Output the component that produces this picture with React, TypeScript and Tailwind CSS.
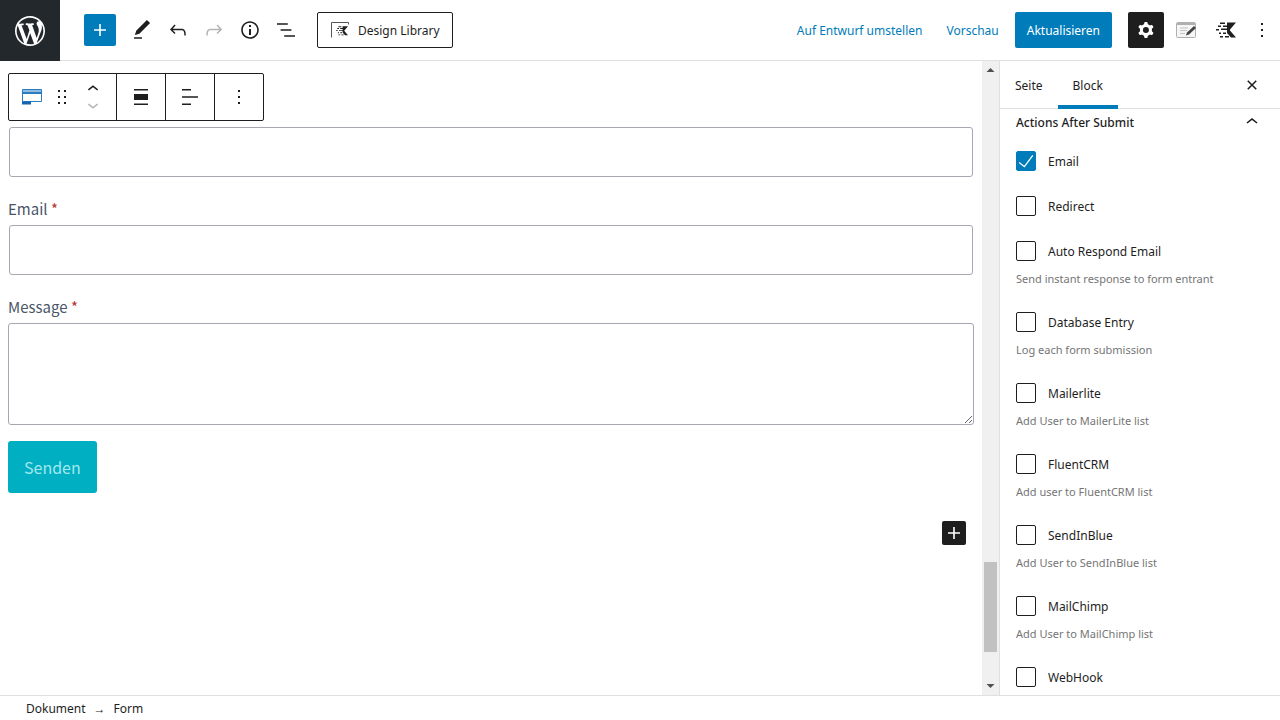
import { useState } from 'react';
import type { ReactNode } from 'react';

type Action = { id: string; label: string; help?: string };

const actions: Action[] = [
  { id: 'email', label: 'Email' },
  { id: 'redirect', label: 'Redirect' },
  { id: 'autoEmail', label: 'Auto Respond Email', help: 'Send instant response to form entrant' },
  { id: 'entry', label: 'Database Entry', help: 'Log each form submission' },
  { id: 'mailerlite', label: 'Mailerlite', help: 'Add User to MailerLite list' },
  { id: 'fluentCRM', label: 'FluentCRM', help: 'Add user to FluentCRM list' },
  { id: 'sendinblue', label: 'SendInBlue', help: 'Add User to SendInBlue list' },
  { id: 'mailchimp', label: 'MailChimp', help: 'Add User to MailChimp list' },
  { id: 'webhook', label: 'WebHook' },
];

const paths = {
  plus: 'M18 11.2h-5.2V6h-1.6v5.2H6v1.6h5.2V18h1.6v-5.2H18z',
  edit: 'M20.1 5.1L16.9 2 6.2 12.7l-1.3 4.4 4.5-1.3L20.1 5.1zM4 20.8h8v-1.5H4v1.5z',
  undo: 'M18.3 11.7c-.6-.6-1.4-.9-2.3-.9H6.7l2.9-3.3-1.1-1-4.5 5L8.5 16l1-1-2.7-2.7H16c.5 0 .9.2 1.3.5 1 1 1 3.4 1 4.5v.3h1.5v-.2c0-1.5 0-4.3-1.5-5.7z',
  redo: 'M15.6 6.5l-1.1 1 2.9 3.3H8c-.9 0-1.7.3-2.3.9-1.4 1.5-1.4 4.2-1.4 5.6v.2h1.5v-.3c0-1.1 0-3.5 1-4.5.3-.3.7-.5 1.3-.5h9.2L14.5 15l1.1 1.1 4.6-4.6-4.6-5z',
  info: 'M12 3.2c-4.8 0-8.8 3.9-8.8 8.8 0 4.8 3.9 8.8 8.8 8.8 4.8 0 8.8-3.9 8.8-8.8 0-4.8-4-8.8-8.8-8.8zm0 16c-4 0-7.2-3.3-7.2-7.2C4.8 8 8 4.8 12 4.8s7.2 3.3 7.2 7.2c0 4-3.2 7.2-7.2 7.2zM11 17h2v-6h-2v6zm0-8h2V7h-2v2z',
  listView: 'M13.8 5.2H3v1.5h10.8V5.2zm-3.6 12v1.5H21v-1.5H10.2zm7.2-6H6.6v1.5h10.8v-1.5z',
  cog: 'M10.289 4.836A1 1 0 0111.275 4h1.306a1 1 0 01.987.836l.244 1.466c.787.26 1.503.679 2.108 1.218l1.393-.522a1 1 0 011.216.437l.653 1.13a1 1 0 01-.23 1.273l-1.148.944a6.025 6.025 0 010 2.435l1.149.946a1 1 0 01.23 1.272l-.653 1.13a1 1 0 01-1.216.437l-1.394-.522c-.605.54-1.32.958-2.108 1.218l-.244 1.466a1 1 0 01-.987.836h-1.306a1 1 0 01-.986-.836l-.244-1.466a5.995 5.995 0 01-2.108-1.218l-1.394.522a1 1 0 01-1.217-.436l-.653-1.131a1 1 0 01.23-1.272l1.149-.946a6.026 6.026 0 010-2.435l-1.148-.944a1 1 0 01-.23-1.272l.653-1.131a1 1 0 011.217-.437l1.393.522a5.994 5.994 0 012.108-1.218l.244-1.466zM14.929 12a3 3 0 11-6 0 3 3 0 016 0z',
  more: 'M13 19h-2v-2h2v2zm0-6h-2v-2h2v2zm0-6h-2V5h2v2z',
  close: 'M12 13.06l3.712 3.713 1.061-1.06L13.061 12l3.712-3.712-1.06-1.06L12 10.938 8.288 7.227l-1.061 1.06L10.939 12l-3.712 3.712 1.06 1.061L12 13.061z',
  up: 'M6.5 12.4L12 8l5.5 4.4-.9 1.2L12 10l-4.5 3.6-1-1.2z',
  down: 'M17.5 11.6L12 16l-5.5-4.4.9-1.2L12 14l4.5-3.6 1 1.2z',
  align: 'M5 4h14v1.5H5V4zM5 9h14v6H5V9zm0 9.500h14V20H5v-1.500z',
  justify: 'M4 4h9v1.500H4V4zm0 7.200h16v1.600H4v-1.600zm0 7.300h9V20H4v-1.500z',
};

function Icon({ d, className = 'size-6' }: { d: string; className?: string }) {
  return (
    <svg viewBox="0 0 24 24" className={className} fill="currentColor" fillRule="evenodd" aria-hidden="true">
      <path d={d} />
    </svg>
  );
}

function WordPressLogo() {
  return (
    <svg viewBox="-2 -2 24 24" className="size-9" fill="currentColor" aria-hidden="true">
      <path d="M20 10c0-5.51-4.49-10-10-10C4.48 0 0 4.49 0 10c0 5.52 4.48 10 10 10 5.51 0 10-4.48 10-10zM7.78 15.37L4.37 6.22c.55-.02 1.17-.08 1.17-.08.5-.06.44-1.13-.06-1.11 0 0-1.45.11-2.37.11-.18 0-.37 0-.58-.01C4.12 2.69 6.87 1.11 10 1.11c2.33 0 4.45.87 6.05 2.34-.68-.11-1.65.39-1.65 1.58 0 .74.45 1.36.9 2.1.35.61.55 1.36.55 2.46 0 1.49-1.4 5-1.4 5l-3.03-8.37c.54-.02.82-.17.82-.17.5-.05.44-1.25-.06-1.22 0 0-1.44.12-2.38.12-.87 0-2.33-.12-2.33-.12-.5-.03-.56 1.2-.06 1.22l.92.08 1.26 3.41zM17.41 10c.24-.64.74-1.87.43-4.25.7 1.29 1.05 2.71 1.05 4.25 0 3.29-1.73 6.24-4.4 7.78.97-2.59 1.94-5.2 2.92-7.78zM6.1 18.09C3.12 16.65 1.11 13.53 1.11 10c0-1.3.23-2.48.72-3.59C3.25 10.3 4.67 14.2 6.1 18.09zm4.03-6.63l2.58 6.98c-.86.29-1.76.45-2.71.45-.79 0-1.57-.11-2.29-.33.81-2.38 1.62-4.74 2.42-7.1z" />
    </svg>
  );
}

const kadencePath =
  'M11 .5h9l-6 7v1l6 7h-5l-4-4.500v-3H5v-1.500h6V5H7V3.500h4zM4 .5h5V2H4zM2 3.500h3V5H2zM0 7h3v1.500H0zM3 10.500h2V12H3zM7 10.500h3V12H7zM4 14h3v1.500H4zM9 14h4v1.500H9z';

function KadenceIcon() {
  return (
    <svg viewBox="0 0 20 16" className="h-4 w-5" fill="currentColor" aria-hidden="true">
      <path d={kadencePath} />
    </svg>
  );
}

function LibraryIcon() {
  return (
    <svg viewBox="0 0 20 16" className="h-4 w-5" aria-hidden="true">
      <path d="M1.500 15.500V.5h17v2" fill="none" stroke="#555" />
      <path d={kadencePath} transform="translate(6 4) scale(.6)" fill="#1e1e1e" />
    </svg>
  );
}

function NotesIcon() {
  return (
    <svg viewBox="0 0 20 16" className="h-4 w-5" aria-hidden="true">
      <rect x=".5" y=".5" width="19" height="15" rx="1" fill="#f6f6f6" stroke="#b0b0b0" />
      <path d="M1 2h18" stroke="#b0b0b0" strokeWidth="2" />
      <path d="M4 6h8M4 8.500h7M4 11.500h5" stroke="#c4c4c4" />
      <path d="M10 13.500l1-3 7-6.500 2 2-7 6.500z" fill="#444" />
    </svg>
  );
}

function FormBlockIcon() {
  return (
    <svg viewBox="0 0 20 16" className="h-4 w-5" aria-hidden="true">
      <path d="M.5.5h19v12H.5z" fill="#fff" stroke="#2b7bc0" />
      <path d="M1 1h18v2H1z" fill="#8fbbe0" />
      <path d="M1 3h18v2H1z" fill="#2b7bc0" />
      <path d="M0 12.500h9v3H0z" fill="#1565b0" />
    </svg>
  );
}

function DragHandle() {
  return (
    <svg viewBox="0 0 18 18" className="size-[18px]" fill="currentColor" aria-hidden="true">
      <path d="M5 4h2V2H5v2zm6-2v2h2V2h-2zm-6 8h2V8H5v2zm6 0h2V8h-2v2zm-6 6h2v-2H5v2zm6 0h2v-2h-2v2z" />
    </svg>
  );
}

function IconButton({ label, className = '', children }: { label: string; className?: string; children: ReactNode }) {
  return (
    <button type="button" aria-label={label} className={`flex size-9 shrink-0 items-center justify-center rounded-xs ${className}`}>
      {children}
    </button>
  );
}

function Header() {
  return (
    <header className="flex h-[61px] shrink-0 items-center justify-between border-b border-[#e0e0e0]">
      <div className="flex items-center">
        <a href="#dashboard" aria-label="WordPress" className="-mb-px flex h-[61px] w-[60px] items-center justify-center bg-[#23282d] text-white">
          <WordPressLogo />
        </a>
        <button type="button" aria-label="Block hinzufügen" className="mr-2 ml-6 flex size-8 items-center justify-center rounded-xs bg-[#007cba] text-white">
          <Icon d={paths.plus} />
        </button>
        <IconButton label="Werkzeuge"><Icon d={paths.edit} /></IconButton>
        <IconButton label="Rückgängig"><Icon d={paths.undo} /></IconButton>
        <IconButton label="Wiederholen" className="text-[#b5b5b5]"><Icon d={paths.redo} /></IconButton>
        <IconButton label="Details"><Icon d={paths.info} /></IconButton>
        <IconButton label="Listenansicht"><Icon d={paths.listView} /></IconButton>
        <button type="button" className="ml-[13px] flex h-9 items-center gap-2 rounded-xs border border-[#1e1e1e] px-3">
          <LibraryIcon />
          <span className="pt-0.5">Design Library</span>
        </button>
      </div>
      <div className="flex items-center">
        <a href="#entwurf" className="px-3 pt-0.5 text-[#007cba]">Auf Entwurf umstellen</a>
        <a href="#vorschau" className="px-3 pt-0.5 text-[#007cba]">Vorschau</a>
        <button type="button" className="mr-4 ml-1 h-9 rounded-xs bg-[#007cba] px-3 pt-0.5 text-white">Aktualisieren</button>
        <IconButton label="Einstellungen" className="bg-[#1e1e1e] text-white"><Icon d={paths.cog} /></IconButton>
        <IconButton label="Notizen" className="ml-1"><NotesIcon /></IconButton>
        <IconButton label="Kadence" className="ml-1"><KadenceIcon /></IconButton>
        <IconButton label="Optionen"><Icon d={paths.more} /></IconButton>
      </div>
    </header>
  );
}

function BlockToolbar() {
  return (
    <div role="toolbar" aria-label="Block-Werkzeuge" className="flex h-12 w-64 divide-x divide-[#1e1e1e] rounded-xs border border-[#1e1e1e]">
      <div className="flex flex-1 items-center justify-between px-3">
        <button type="button" aria-label="Form" className="pl-px"><FormBlockIcon /></button>
        <button type="button" aria-label="Ziehen"><DragHandle /></button>
        <div className="flex flex-col">
          <button type="button" aria-label="Nach oben" className="flex h-4 items-center"><Icon d={paths.up} className="size-[22px]" /></button>
          <button type="button" aria-label="Nach unten" disabled className="flex h-4 items-center text-[#b5b5b5]"><Icon d={paths.down} className="size-[22px]" /></button>
        </div>
      </div>
      <button type="button" aria-label="Ausrichtung" className="flex w-[49px] items-center justify-center"><Icon d={paths.align} /></button>
      <button type="button" aria-label="Textausrichtung" className="flex w-[49px] items-center justify-center"><Icon d={paths.justify} /></button>
      <button type="button" aria-label="Mehr" className="flex w-12 items-center justify-center"><Icon d={paths.more} /></button>
    </div>
  );
}

function FieldLabel({ htmlFor, children }: { htmlFor: string; children: string }) {
  return (
    <label htmlFor={htmlFor} className="mt-5 block h-7 text-[15px] leading-6 font-normal text-[#4a5568]">
      {children} <span className="text-[#b83232]">*</span>
    </label>
  );
}

function Canvas() {
  return (
    <main className="min-w-0 flex-1 overflow-hidden px-2 pt-3">
      <BlockToolbar />
      <form className="mt-[6px] font-['Noto_Sans_CJK_SC','Noto_Sans',sans-serif]" onSubmit={(e) => e.preventDefault()}>
        <div className="px-px">
          <input type="text" aria-label="Name" className="block h-[50px] w-full rounded-[3px] border border-[#a5a8b2] px-3" />
        </div>
        <FieldLabel htmlFor="email">Email</FieldLabel>
        <div className="px-px">
          <input id="email" type="email" className="block h-[50px] w-full rounded-[3px] border border-[#a5a8b2] px-3" />
        </div>
        <FieldLabel htmlFor="message">Message</FieldLabel>
        <textarea id="message" className="block h-[102px] w-full resize rounded-[3px] border border-[#a5a8b2] p-3" />
        <button type="submit" className="mt-4 h-[52px] rounded-[3px] bg-[#00afc1] px-4 text-base text-[#a0e8ee]">Senden</button>
      </form>
      <div className="mt-7 flex justify-end pr-2">
        <button type="button" aria-label="Block hinzufügen" className="flex size-6 items-center justify-center rounded-xs bg-[#1e1e1e] text-white">
          <Icon d={paths.plus} />
        </button>
      </div>
    </main>
  );
}

function Scrollbar() {
  return (
    <div aria-hidden="true" className="flex w-[17px] shrink-0 flex-col items-center bg-[#f0f0f0] text-[#505050]">
      <svg viewBox="0 0 17 17" className="size-[17px]" fill="currentColor"><path d="M4.500 11h8l-4-4z" /></svg>
      <div className="grow" />
      <div className="h-[90px] w-[13px] bg-[#c1c1c1]" />
      <div className="h-[26px]" />
      <svg viewBox="0 0 17 17" className="size-[17px]" fill="currentColor"><path d="M4.500 6h8l-4 4z" /></svg>
    </div>
  );
}

function Sidebar() {
  const [enabled, setEnabled] = useState<string[]>(['email']);

  const toggle = (id: string) => {
    setEnabled((prev) => (prev.includes(id) ? prev.filter((a) => a !== id) : [...prev, id]));
  };

  return (
    <aside className="flex w-[281px] shrink-0 flex-col overflow-hidden border-l border-[#e0e0e0]">
      <div className="flex h-12 shrink-0 items-stretch justify-between border-b border-[#e0e0e0] pr-4">
        <div role="tablist" className="flex">
          <button type="button" role="tab" aria-selected="false" className="px-[15px] pt-0.5">Seite</button>
          <button type="button" role="tab" aria-selected="true" className="-mb-px border-b-4 border-[#007cba] px-[15px] pt-[5px]">Block</button>
        </div>
        <button type="button" aria-label="Schließen"><Icon d={paths.close} /></button>
      </div>
      <div className="min-h-0 flex-1 overflow-hidden px-4">
        <button type="button" aria-expanded="true" className="flex h-[26px] w-full items-center justify-between text-left font-medium">
          <span className="pt-0.5">Actions After Submit</span>
          <Icon d={paths.up} />
        </button>
        <ul className="mt-4 flex flex-col gap-[25px]">
          {actions.map((a) => (
            <li key={a.id}>
              <label className="flex h-5 items-center gap-3">
                <span className="grid size-5 shrink-0">
                  <input
                    type="checkbox"
                    checked={enabled.includes(a.id)}
                    onChange={() => toggle(a.id)}
                    className="peer col-start-1 row-start-1 size-5 appearance-none rounded-xs border border-[#1e1e1e] bg-white checked:border-[#007cba] checked:bg-[#007cba]"
                  />
                  <svg viewBox="0 0 24 24" className="pointer-events-none col-start-1 row-start-1 hidden size-5 text-white peer-checked:block" fill="currentColor" aria-hidden="true">
                    <path d="M19.500 4.700L9.900 17.600l-5.700-4.500-.9 1.200 6.900 5.500L20.800 5.600z" />
                  </svg>
                </span>
                <span className="pt-0.5">{a.label}</span>
              </label>
              {a.help && <p className="mt-[10px] text-[11px] leading-4 text-[#757575]">{a.help}</p>}
            </li>
          ))}
        </ul>
      </div>
    </aside>
  );
}

export default function App() {
  return (
    <div className="flex h-screen flex-col bg-white font-['Noto_Sans','Open_Sans',sans-serif] text-xs text-[#1e1e1e]">
      <Header />
      <div className="flex min-h-0 flex-1">
        <Canvas />
        <Scrollbar />
        <Sidebar />
      </div>
      <footer className="flex h-[25px] shrink-0 items-center gap-2 border-t border-[#e0e0e0] px-[26px] pt-0.5">
        <a href="#dokument">Dokument</a>
        <span>→</span>
        <span>Form</span>
      </footer>
    </div>
  );
}
